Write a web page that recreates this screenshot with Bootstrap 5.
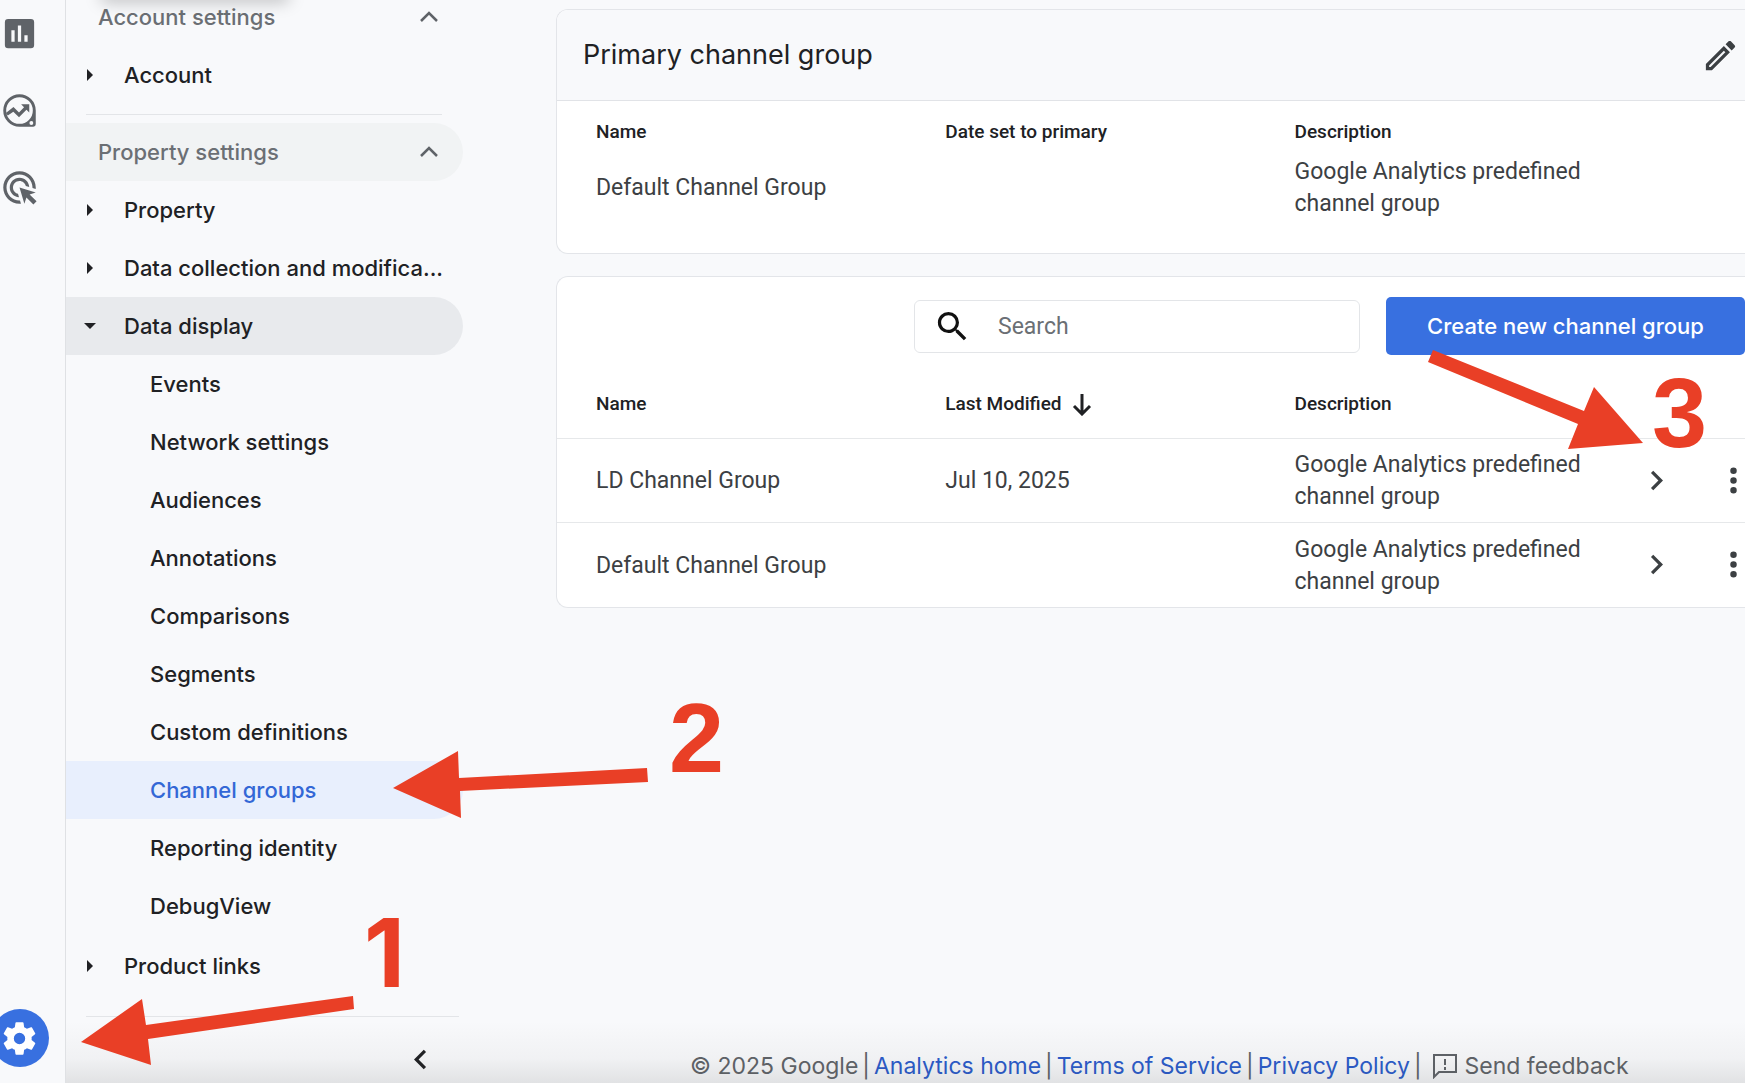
<!DOCTYPE html>
<html lang="en">
<head>
<meta charset="utf-8">
<meta name="viewport" content="width=device-width, initial-scale=1">
<title>Channel groups</title>
<link href="https://cdn.jsdelivr.net/npm/bootstrap@5.3.0/dist/css/bootstrap.min.css" rel="stylesheet">
<style>
  body { background: #f8f9fb; color: #202124; font-family: Inter, "Open Sans", sans-serif; font-size: 22px; line-height: 32px; }
  .ico { width: 39px; height: 39px; fill: currentColor; display: block; flex: none; }
  .bare { border: 0; background: none; padding: 0; color: inherit; font-weight: inherit; }
  button.bare:not(.d-flex) { display: block; }

  .rail { width: 66px; border-right: 1px solid #dfe1e4; padding: 14px 0 16px; color: #5f6368; gap: 38px; }
  .rail-clip { overflow: hidden; width: 49px; height: 58px; }
  .rail-disc { width: 58px; height: 58px; margin-left: -9px; padding-left: 9px; border-radius: 50%; background: #3870e0; color: #fff; }

  .side { width: 397px; flex: none; font-weight: 500; }
  .side-list { margin-top: -12px; }
  .side-row { height: 58px; width: 100%; color: #202124; text-decoration: none; border-radius: 0 29px 29px 0; text-align: left; }
  .side-head { color: #6b6f74; padding: 0 17px 0 32px; justify-content: space-between; }
  .side-head.shaded { background: #f1f3f4; }
  .side-item { padding: 0 8px 0 18px; }
  .side-item.open { background: #e8eaed; }
  .side-item .caret { width: 12px; height: 12px; margin-right: 28px; fill: #202124; flex: none; }
  .side-sub { padding-bottom: 2px; }
  .side-sub .side-row { padding-left: 84px; }
  .side-sub .active { background: #e8effd; color: #3367d6; }
  .side-rule { height: 1px; background: #e3e5e8; margin: 10px 21px 8px 20px; }
  .side-rule.last { margin: 21px 4px 23px 20px; }
  .side-foot { padding-right: 23px; }
  .top-shade { top: -12px; left: 34px; width: 190px; height: 12px; border-radius: 6px; box-shadow: 0 2px 16px rgba(0,0,0,.26); }

  .content { padding: 9px 0 0 93px; min-width: 0; }
  .panel { background: #fff; border: 1px solid #e3e5e9; border-right: 0; border-radius: 12px 0 0 12px; overflow: hidden; }
  .panel + .panel { margin-top: 22px; }
  .panel-head { background: #f8f9fb; border-bottom: 1px solid #e1e3e7; height: 91px; padding: 0 5px 0 26px; }
  .panel-head h1 { font-size: 27px; font-weight: 400; line-height: 36px; margin: 0; }
  .panel-head .bare { color: #3c4043; }
  .grid-table { width: 100%; table-layout: fixed; font-family: Roboto, sans-serif; font-size: 23px; color: #3c4043; }
  .grid-table th { font-size: 19px; font-weight: 500; color: #202124; padding: 0 0 0 39px; }
  .grid-table td { padding: 0 0 0 39px; line-height: 32px; }
  .grid-table .c-main { width: 29.4%; }
  .grid-table .c-go { width: 6%; }
  .lined th { height: 67px; border-bottom: 1px solid #e6e8ea; }
  .lined td { height: 84px; padding-top: 2px; }
  .lined tr + tr td { height: 85px; border-top: 1px solid #e6e8ea; }
  .lined td.act { padding: 0 0 0 32px; }
  .lined td.more { padding: 0 0 0 38px; }
  .plain { margin-bottom: 33px; }
  .plain th { height: 55px; padding-top: 7px; }

  .tools { padding-top: 20px; gap: 26px; }
  .search-box { width: 446px; height: 53px; border: 1px solid #e3e5e8; border-radius: 6px; padding-left: 18px; gap: 26px; color: #111; }
  .search-box input { border: 0; outline: 0; background: none; width: 100%; font-family: Roboto, sans-serif; font-size: 23px; padding: 2px 0 0; }
  .search-box input::placeholder { color: #6b6f74; opacity: 1; }
  .btn-create, .btn-create:hover { width: 359px; height: 58px; background: #3870e0; color: #fff; border: 0; border-radius: 5px; font-size: 22px; font-weight: 500; padding: 0; }

  .foot { color: #5f6368; font-size: 23px; gap: 4px; padding: 0 0 1px 134px; }
  .foot a { color: #2a5bcb; text-decoration: none; }
  .foot .feedback { gap: 7px; margin-left: 6px; }
  .foot-shade { left: 66px; right: 0; bottom: 0; height: 62px; background: linear-gradient(rgba(60,60,60,0), rgba(60,60,60,.04) 60%, rgba(60,60,60,.12)); pointer-events: none; }
  .marks { top: 0; left: 0; width: 1745px; height: 1083px; fill: #e93f26; pointer-events: none; z-index: 5; }
  .marks text { font-family: "Liberation Sans", sans-serif; font-weight: 700; font-size: 99px; }
  .marks .one { font-family: Inter, sans-serif; font-size: 95px; }
</style>
<script src="https://cdn.jsdelivr.net/npm/bootstrap@5.3.0/dist/js/bootstrap.bundle.min.js"></script>
</head>
<body>
<div class="d-flex vh-100 overflow-hidden position-relative">

  <nav class="rail d-flex flex-column flex-shrink-0" aria-label="Main">
    <a href="#" class="text-reset" aria-label="Reports"><svg class="ico" viewBox="0 0 24 24"><path d="M19 3H5a2 2 0 0 0-2 2v14a2 2 0 0 0 2 2h14a2 2 0 0 0 2-2V5a2 2 0 0 0-2-2zM9 17H7v-7h2v7zm4 0h-2V7h2v10zm4 0h-2v-4h2v4z"/></svg></a>
    <a href="#" class="text-reset" aria-label="Explore"><svg class="ico" viewBox="0 0 24 24"><path fill-rule="evenodd" d="M12 2a10 10 0 1 0 0 20h8.500a1.500 1.500 0 0 0 1.500-1.500V12A10 10 0 0 0 12 2zm0 1.800a8.200 8.200 0 1 1 0 16.400 8.200 8.200 0 0 1 0-16.400zm7.300 14.700a1.200 1.200 0 1 1 0 2.400 1.200 1.200 0 0 1 0-2.400z"/><path d="M13 8.200h5v5l-1.700-1.700-4.600 4.600-3.500-3.400L4.800 15l-1.200-1.500 4.700-3.700 3.400 3.400 3.100-3.200z"/></svg></a>
    <a href="#" class="text-reset" aria-label="Advertising"><svg class="ico" viewBox="0 0 24 24"><path d="M11.710 17.990C8.530 17.840 6 15.220 6 12c0-3.310 2.690-6 6-6 3.220 0 5.840 2.530 5.990 5.710l-2.100-.63C15.480 9.310 13.890 8 12 8c-2.210 0-4 1.790-4 4 0 1.890 1.310 3.480 3.080 3.890l.63 2.100zM22 12c0 .3-.01.6-.04.9l-1.970-.59C20 12.210 20 12.100 20 12c0-4.420-3.580-8-8-8s-8 3.580-8 8 3.580 8 8 8c.1 0 .21 0 .31-.01l.59 1.970c-.3.030-.6.040-.9.040C6.480 22 2 17.520 2 12S6.480 2 12 2s10 4.480 10 10zm-3.770 4.260L22 15l-10-3 3 10 1.260-3.770 4.270 4.270 1.980-1.980-4.280-4.260z"/></svg></a>
    <a href="#" class="rail-clip mt-auto d-block" aria-label="Admin"><span class="rail-disc d-flex align-items-center"><svg class="ico" viewBox="0 0 24 24"><path d="M19.430 12.980c.04-.32.07-.64.07-.98s-.03-.66-.07-.98l2.110-1.650c.19-.15.24-.42.12-.64l-2-3.460c-.12-.22-.39-.3-.61-.22l-2.490 1c-.52-.4-1.080-.73-1.690-.98l-.38-2.650A.49.49 0 0 0 14 2h-4c-.25 0-.46.18-.49.42l-.38 2.650c-.61.25-1.170.59-1.690.98l-2.490-1c-.23-.09-.49 0-.61.22l-2 3.460c-.13.22-.07.49.12.64l2.110 1.650c-.04.32-.07.65-.07.98s.03.66.07.98l-2.110 1.650c-.19.15-.24.42-.12.64l2 3.460c.12.22.39.3.61.22l2.490-1c.52.4 1.080.73 1.690.98l.38 2.650c.03.24.24.42.49.42h4c.25 0 .46-.18.49-.42l.38-2.650c.61-.25 1.170-.59 1.690-.98l2.490 1c.23.09.49 0 .61-.22l2-3.460c.12-.22.07-.49-.12-.64l-2.110-1.650zM12 15.500a3.500 3.500 0 1 1 0-7 3.500 3.500 0 0 1 0 7z"/></svg></span></a>
  </nav>

  <aside class="side position-relative">
    <div class="top-shade position-absolute"></div>
    <div class="side-list">
      <button type="button" class="bare side-row side-head d-flex align-items-center" aria-expanded="true">Account settings
        <svg width="28" height="20" viewBox="0 0 28 20" fill="none" stroke="#5f6368" stroke-width="2.500"><path d="M3 14l8-8 8 8"/></svg></button>
      <a href="#" class="side-row side-item d-flex align-items-center"><svg class="caret" viewBox="0 0 12 12"><path d="M3 0l6 6-6 6z"/></svg>Account</a>
      <div class="side-rule"></div>
      <button type="button" class="bare side-row side-head shaded d-flex align-items-center" aria-expanded="true">Property settings
        <svg width="28" height="20" viewBox="0 0 28 20" fill="none" stroke="#5f6368" stroke-width="2.500"><path d="M3 14l8-8 8 8"/></svg></button>
      <a href="#" class="side-row side-item d-flex align-items-center"><svg class="caret" viewBox="0 0 12 12"><path d="M3 0l6 6-6 6z"/></svg>Property</a>
      <a href="#" class="side-row side-item d-flex align-items-center text-nowrap"><svg class="caret" viewBox="0 0 12 12"><path d="M3 0l6 6-6 6z"/></svg>Data collection and modifica...</a>
      <a href="#" class="side-row side-item open d-flex align-items-center"><svg class="caret" viewBox="0 0 12 12"><path d="M0 3h12L6 9z"/></svg>Data display</a>
      <div class="side-sub">
        <a href="#" class="side-row d-flex align-items-center">Events</a>
        <a href="#" class="side-row d-flex align-items-center">Network settings</a>
        <a href="#" class="side-row d-flex align-items-center">Audiences</a>
        <a href="#" class="side-row d-flex align-items-center">Annotations</a>
        <a href="#" class="side-row d-flex align-items-center">Comparisons</a>
        <a href="#" class="side-row d-flex align-items-center">Segments</a>
        <a href="#" class="side-row d-flex align-items-center">Custom definitions</a>
        <a href="#" class="side-row active d-flex align-items-center" aria-current="page">Channel groups</a>
        <a href="#" class="side-row d-flex align-items-center">Reporting identity</a>
        <a href="#" class="side-row d-flex align-items-center">DebugView</a>
      </div>
      <a href="#" class="side-row side-item d-flex align-items-center"><svg class="caret" viewBox="0 0 12 12"><path d="M3 0l6 6-6 6z"/></svg>Product links</a>
      <div class="side-rule last"></div>
      <div class="side-foot d-flex justify-content-end">
        <button type="button" class="bare" aria-label="Collapse menu"><svg class="ico" viewBox="0 0 24 24"><path d="M15.410 7.410 14 6l-6 6 6 6 1.410-1.410L10.830 12z"/></svg></button>
      </div>
    </div>
  </aside>

  <main class="content flex-grow-1 d-flex flex-column">
    <section class="panel flex-shrink-0">
      <div class="panel-head d-flex align-items-center justify-content-between">
        <h1>Primary channel group</h1>
        <button type="button" class="bare" aria-label="Edit"><svg class="ico" viewBox="0 0 24 24"><path d="M14.060 9.020l.92.92L5.920 19H5v-.92l9.060-9.060M17.660 3c-.25 0-.51.1-.7.29l-1.830 1.830 3.750 3.750 1.830-1.830a1 1 0 0 0 0-1.410l-2.340-2.340c-.2-.2-.45-.29-.71-.29zm-3.600 3.190L3 17.250V21h3.750L17.810 9.940l-3.750-3.750z"/></svg></button>
      </div>
      <table class="grid-table plain">
        <thead><tr><th class="c-main">Name</th><th class="c-main">Date set to primary</th><th class="c-main">Description</th><th></th></tr></thead>
        <tbody><tr><td>Default Channel Group</td><td></td><td>Google Analytics predefined channel group</td><td></td></tr></tbody>
      </table>
    </section>

    <section class="panel flex-shrink-0">
      <div class="tools d-flex align-items-center justify-content-end">
        <div class="search-box d-flex align-items-center">
          <svg class="ico" viewBox="0 0 24 24"><path d="M15.500 14h-.79l-.28-.27A6.470 6.470 0 0 0 16 9.500 6.500 6.500 0 1 0 9.500 16c1.610 0 3.090-.59 4.230-1.570l.27.28v.79l5 4.990L20.490 19l-4.990-5zm-6 0C7.010 14 5 11.990 5 9.500S7.010 5 9.500 5 14 7.010 14 9.500 11.990 14 9.500 14z"/></svg>
          <input type="text" placeholder="Search" aria-label="Search">
        </div>
        <button type="button" class="btn btn-create">Create new channel group</button>
      </div>
      <table class="grid-table lined mt-3">
        <thead><tr><th class="c-main">Name</th><th class="c-main"><span class="d-flex align-items-center gap-2">Last Modified <svg width="24" height="24" viewBox="0 0 24 24" fill="none" stroke="#202124" stroke-width="3"><path d="M12 2v20M4 14l8 8 8-8"/></svg></span></th><th class="c-main">Description</th><th class="c-go"></th><th></th></tr></thead>
        <tbody>
          <tr><td>LD Channel Group</td><td>Jul 10, 2025</td><td>Google Analytics predefined channel group</td>
            <td class="act"><button type="button" class="bare" aria-label="Open"><svg class="ico" viewBox="0 0 24 24"><path d="M10 6 8.590 7.410 13.170 12l-4.580 4.590L10 18l6-6z"/></svg></button></td>
            <td class="more"><button type="button" class="bare" aria-label="More"><svg class="ico" viewBox="0 0 24 24"><path d="M12 8a2 2 0 1 0 0-4 2 2 0 0 0 0 4zm0 2a2 2 0 1 0 0 4 2 2 0 0 0 0-4zm0 6a2 2 0 1 0 0 4 2 2 0 0 0 0-4z"/></svg></button></td></tr>
          <tr><td>Default Channel Group</td><td></td><td>Google Analytics predefined channel group</td>
            <td class="act"><button type="button" class="bare" aria-label="Open"><svg class="ico" viewBox="0 0 24 24"><path d="M10 6 8.590 7.410 13.170 12l-4.580 4.590L10 18l6-6z"/></svg></button></td>
            <td class="more"><button type="button" class="bare" aria-label="More"><svg class="ico" viewBox="0 0 24 24"><path d="M12 8a2 2 0 1 0 0-4 2 2 0 0 0 0 4zm0 2a2 2 0 1 0 0 4 2 2 0 0 0 0-4zm0 6a2 2 0 1 0 0 4 2 2 0 0 0 0-4z"/></svg></button></td></tr>
        </tbody>
      </table>
    </section>

    <footer class="foot d-flex align-items-center mt-auto text-nowrap">
      <span>© 2025 Google</span><span>|</span><a href="#">Analytics home</a><span>|</span><a href="#">Terms of Service</a><span>|</span><a href="#">Privacy Policy</a><span>|</span>
      <button type="button" class="bare feedback d-flex align-items-center"><svg width="26" height="26" viewBox="0 0 26 26" fill="none" stroke="#5f6368" stroke-width="2"><path d="M2 24V2h22v17H7z"/><path d="M13 6v6M13 14v3"/></svg>Send feedback</button>
    </footer>
  </main>

  <div class="foot-shade position-absolute"></div>

  <svg class="marks position-absolute" viewBox="0 0 1745 1083" role="img" aria-label="Steps 1, 2 and 3">
    <path d="M81 1042 142 999 146 1025 353 996 354 1009 148 1039 151 1065z"/>
    <path d="M393 788 458 751 459 778 647 768 648 782 460 791 461 818z"/>
    <path d="M1433 350 1584 411 1594 387 1643 443 1568 449 1578 424 1428 362z"/>
    <text class="one" x="364" y="987">1</text>
    <text x="669" y="772">2</text>
    <text x="1652" y="447">3</text>
  </svg>
</div>
</body>
</html>
